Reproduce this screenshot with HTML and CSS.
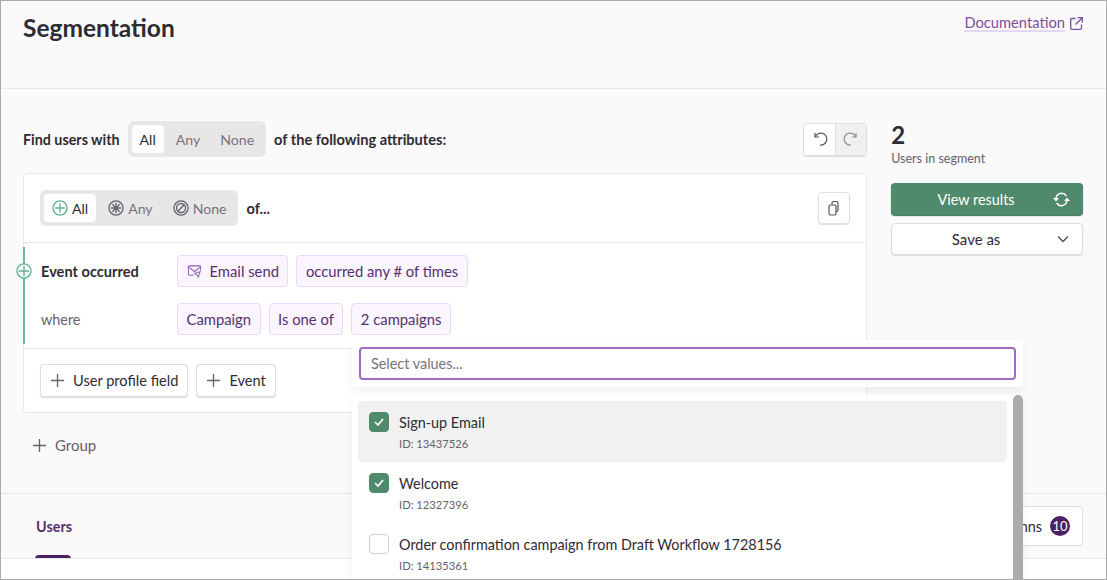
FILE: index.html
```html
<!DOCTYPE html>
<html>
<head>
  <title>Segmentation</title>
  <link rel="stylesheet" href="styles.css">
</head>
<body>
<div class="frame">
  <div class="header">
    <h1>Segmentation</h1>
    <a class="docLink"><span>Documentation</span>
      <svg width="13" height="13" viewBox="0 0 13 13" fill="none" stroke="#7d4f9e" stroke-width="1.3"><path d="M5.5 1.5H1.7a1 1 0 0 0-1 1v8.800a1 1 0 0 0 1 1h8.800a1 1 0 0 0 1-1V7.500"/><path d="M7.500 .7h4.800v4.800M12.300 .7L5.500 7.500"/></svg>
    </a>
  </div>

  <div class="builder">
    <div class="mainCol">
      <div class="findRow">
        <b class="findText">Find users with</b>
        <div class="toggle">
          <span class="opt active">All</span>
          <span class="opt">Any</span>
          <span class="opt">None</span>
        </div>
        <b>of the following attributes:</b>
        <div class="undoGroup">
          <span class="undoBtn">
            <svg width="16" height="16" viewBox="0 0 16 16" fill="none" stroke="#55505a" stroke-width="1.2"><path d="M3 2v4h4"/><path d="M3.200 6A6 6 0 1 1 8 14"/></svg>
          </span>
          <span class="undoBtn off">
            <svg width="16" height="16" viewBox="0 0 16 16" fill="none" stroke="#8c888f" stroke-width="1.2"><path d="M13 2v4H9"/><path d="M12.800 6A6 6 0 1 0 8 14"/></svg>
          </span>
        </div>
      </div>

      <div class="card">
        <div class="cardTop">
          <div class="toggle">
            <span class="opt active">
              <svg class="ico" width="16" height="16" viewBox="0 0 17 17" fill="none" stroke="#5fae8d" stroke-width="1.4"><circle cx="8.500" cy="8.500" r="7.500"/><path d="M8.500 3.500v10M3.500 8.500h10"/></svg>
              All</span>
            <span class="opt">
              <svg class="ico" width="16" height="16" viewBox="0 0 17 17" fill="none" stroke="#66616b" stroke-width="1.4"><circle cx="8.500" cy="8.500" r="7.500"/><path d="M8.500 3v11M3 8.500h11M4.600 4.600l7.800 7.800M12.400 4.600l-7.800 7.800"/></svg>
              Any</span>
            <span class="opt">
              <svg class="ico" width="16" height="16" viewBox="0 0 17 17" fill="none" stroke="#66616b" stroke-width="1.4"><circle cx="8.500" cy="8.500" r="7.500"/><circle cx="8.500" cy="8.500" r="4.800"/><path d="M5.100 11.900l6.800-6.800"/></svg>
              None</span>
          </div>
          <b>of...</b>
          <span class="copyBtn">
            <svg width="16" height="16" viewBox="0 0 16 16" fill="none" stroke="#55505a" stroke-width="1.2"><rect x="3" y="5" width="7" height="10" rx="1.5"/><path d="M6 4.500V3a1.500 1.500 0 0 1 1.500-1.500h3A1.500 1.500 0 0 1 12 3v7a1.500 1.500 0 0 1-1.500 1.500H10"/></svg>
          </span>
        </div>

        <div class="rule">
          <span class="ruleDot">
            <svg width="16" height="16" viewBox="0 0 17 17" fill="#fff" stroke="#5fae8d" stroke-width="1.4"><circle cx="8.500" cy="8.500" r="7.500"/><path d="M8.500 3v11M3 8.500h11"/></svg>
          </span>
          <div class="ruleRow">
            <b class="ruleLabel">Event occurred</b>
            <span class="tag">
              <svg class="tagIco" width="15" height="15" viewBox="0 0 16 16" fill="none" stroke="#9160b5" stroke-width="1.1"><path d="M7 12H2.500a1 1 0 0 1-1-1V3a1 1 0 0 1 1-1h11a1 1 0 0 1 1 1v4"/><path d="M1.500 3l6.500 5 6.500-5"/><path d="M8 10l6-2-2 6-1.500-2.500z"/></svg>
              Email send</span>
            <span class="tag">occurred any # of times</span>
          </div>
          <div class="ruleRow">
            <span class="ruleLabel muted">where</span>
            <span class="tag">Campaign</span>
            <span class="tag">Is one of</span>
            <span class="tag">2 campaigns</span>
          </div>
        </div>

        <div class="cardBottom">
          <span class="addBtn"><svg class="plus" width="15" height="15" viewBox="0 0 15 15" stroke="#66616b" stroke-width="1.3"><path d="M7.500 1v13M1 7.500h13"/></svg>User profile field</span>
          <span class="addBtn"><svg class="plus" width="15" height="15" viewBox="0 0 15 15" stroke="#66616b" stroke-width="1.3"><path d="M7.500 1v13M1 7.500h13"/></svg>Event</span>
        </div>
      </div>

      <div class="groupRow"><svg class="plus" width="15" height="15" viewBox="0 0 15 15" stroke="#66616b" stroke-width="1.3"><path d="M7.500 1v13M1 7.500h13"/></svg>Group</div>
    </div>

    <div class="sideCol">
      <div class="count">2</div>
      <div class="countLabel">Users in segment</div>
      <div class="viewBtn">View results
        <svg class="refresh" width="17" height="15" viewBox="0 0 17 15" fill="none" stroke="#fff" stroke-width="1.5"><path d="M3 6.500A5.600 5.600 0 0 1 13.300 4"/><path d="M14 8.500A5.600 5.600 0 0 1 3.700 11"/><path d="M0 6h6L3 9.500zM11 9h6l-3-3.500z" fill="#fff" stroke="none"/></svg>
      </div>
      <div class="saveBtn">Save as
        <svg class="chev" width="12" height="8" viewBox="0 0 12 8" fill="none" stroke="#55505a" stroke-width="1.4"><path d="M1 1.500l5 5 5-5"/></svg>
      </div>
    </div>
  </div>

  <div class="results">
    <span class="usersTab">Users</span>
    <span class="columnsBtn">Columns <em>10</em></span>
  </div>
  <div class="footerBand"></div>

  <div class="dropdown">
    <div class="searchPanel">
      <div class="searchInput">Select values...</div>
    </div>
    <div class="listPanel">
      <div class="item hover">
        <span class="check on"><svg width="12" height="10" viewBox="0 0 12 10" fill="none" stroke="#fff" stroke-width="1.7"><path d="M2 5l3 3 5-6"/></svg></span>
        <div><div class="itemName">Sign-up Email</div><div class="itemId">ID: 13437526</div></div>
      </div>
      <div class="item">
        <span class="check on"><svg width="12" height="10" viewBox="0 0 12 10" fill="none" stroke="#fff" stroke-width="1.7"><path d="M2 5l3 3 5-6"/></svg></span>
        <div><div class="itemName">Welcome</div><div class="itemId">ID: 12327396</div></div>
      </div>
      <div class="item">
        <span class="check"></span>
        <div><div class="itemName">Order confirmation campaign from Draft Workflow 1728156</div><div class="itemId">ID: 14135361</div></div>
      </div>
      <div class="scrollThumb"></div>
    </div>
  </div>
</div>
</body>
</html>
```
FILE: styles.css
```css
* {
    box-sizing: border-box;
}
html, body {
    margin: 0;
    padding: 0;
}
body {
    font-family: "Lato", "Liberation Sans", sans-serif;
    font-size: 14.4px;
    color: #2f2b33;
}
b {
    font-weight: 700;
    font-size: 14.6px;
}
.frame {
    position: relative;
    width: 1107px;
    height: 580px;
    overflow: hidden;
    background: #fafafa;
    border: 1px solid #ababab;
}

.header {
    display: flex;
    justify-content: space-between;
    height: 88px;
    padding: 0 23px 0 22px;
    border-bottom: 1px solid #e9e8e9;
}
.header h1 {
    margin: 12px 0 0 0;
    font-size: 24.5px;
    line-height: 29px;
    font-weight: 700;
}
.docLink {
    display: flex;
    align-items: center;
    gap: 5px;
    height: 20px;
    margin-top: 12px;
    font-size: 14.7px;
    color: #7d4f9e;
}
.docLink span {
    border-bottom: 2px solid #e6d6f2;
    line-height: 16px;
}

.builder {
    display: flex;
    gap: 24px;
    height: 405px;
    padding: 32px 23px 0 22px;
    border-bottom: 1px solid #e9e8e9;
}
.mainCol {
    width: 845px;
}
.sideCol {
    width: 192px;
}

.findRow {
    display: flex;
    align-items: center;
    gap: 8px;
    height: 36px;
}
.findText {
    font-size: 14.3px;
}
.toggle {
    display: flex;
    align-items: center;
    height: 36px;
    padding: 4px;
    background: #e8e7e8;
    border-radius: 6px;
    font-size: 14.1px;
}
.opt {
    display: flex;
    align-items: center;
    gap: 4px;
    height: 28px;
    padding: 0 8px;
    margin-right: 4px;
    border-radius: 4px;
    color: #77727c;
}
.opt:last-child {
    margin-right: 0;
}
.opt.active {
    background: #fff;
    color: #2f2b33;
}
.undoGroup {
    display: flex;
    margin-left: auto;
    height: 33px;
    border: 1px solid #dfdedf;
    border-radius: 4px;
    box-shadow: 0 1px 1px #ddd;
    overflow: hidden;
}
.undoBtn {
    display: flex;
    align-items: center;
    justify-content: center;
    width: 31px;
    background: #fff;
}
.undoBtn.off {
    background: #f1f0f1;
    border-left: 1px solid #dfdedf;
}

.card {
    margin-top: 16px;
    background: #fff;
    border: 1px solid #e9e8e9;
    border-radius: 4px;
}
.cardTop {
    display: flex;
    align-items: center;
    gap: 8px;
    height: 69px;
    padding: 0 16px;
    border-bottom: 1px solid #e9e8e9;
}
.copyBtn {
    display: flex;
    align-items: center;
    justify-content: center;
    width: 32px;
    height: 32px;
    margin-left: auto;
    border: 1px solid #dfdedf;
    border-radius: 4px;
    box-shadow: 0 1px 1px #ddd;
}
.rule {
    position: relative;
    height: 105px;
    padding-top: 12px;
}
.rule::before {
    content: "";
    position: absolute;
    left: -1px;
    top: 4px;
    bottom: 4px;
    width: 2px;
    background: #6fb596;
}
.ruleDot {
    position: absolute;
    left: -8px;
    top: 20px;
    width: 16px;
    height: 16px;
}
.ruleDot svg {
    display: block;
}
.ruleRow {
    display: flex;
    align-items: center;
    gap: 8px;
    height: 32px;
    margin-bottom: 16px;
    padding-left: 17px;
}
.ruleLabel {
    width: 128px;
}
.muted {
    color: #66616b;
}
.tag {
    display: flex;
    align-items: center;
    height: 32px;
    padding: 0 8.5px;
    background: #faf5fe;
    border: 1px solid #ead9f6;
    border-radius: 4px;
    font-size: 14.8px;
    color: #55306f;
}
.tagIco {
    margin-right: 8px;
}
.cardBottom {
    display: flex;
    gap: 8px;
    height: 64px;
    padding: 15px 16px 0 16px;
    border-top: 1px solid #e9e8e9;
}
.addBtn {
    display: flex;
    align-items: center;
    height: 33px;
    padding: 0 9px 0 9px;
    background: #fff;
    border: 1px solid #dfdedf;
    border-radius: 4px;
    box-shadow: 0 1px 1px #ddd;
    font-size: 14.6px;
}
.plus {
    margin-right: 8px;
}
.groupRow {
    display: flex;
    align-items: center;
    height: 32px;
    margin-top: 16px;
    padding-left: 9px;
    font-size: 15px;
    color: #66616b;
}

.count {
    font-size: 24px;
    font-weight: 700;
    line-height: 28px;
}
.countLabel {
    font-size: 12.5px;
    line-height: 16px;
    margin-top: 2px;
    color: #66616b;
}
.viewBtn, .saveBtn {
    position: relative;
    display: flex;
    align-items: center;
    justify-content: center;
    height: 32px;
    padding-right: 22px;
    border-radius: 4px;
}
.viewBtn {
    margin-top: 16px;
    background: #4f8a6c;
    color: #fff;
    box-shadow: 0 1px 1px #3d6e55;
}
.saveBtn {
    margin-top: 8px;
    background: #fff;
    border: 1px solid #dfdedf;
    box-shadow: 0 1px 1px #ddd;
    font-size: 15px;
}
.refresh, .chev {
    position: absolute;
    right: 13px;
}

.results {
    display: flex;
    justify-content: space-between;
    align-items: center;
    height: 64px;
    padding: 0 23px 0 35px;
}
.usersTab {
    color: #55306f;
    font-weight: 700;
}
.columnsBtn {
    display: flex;
    align-items: center;
    gap: 8px;
    height: 40px;
    padding: 0 12px;
    background: #fff;
    border: 1px solid #dfdedf;
    border-radius: 4px;
}
.columnsBtn em {
    display: flex;
    align-items: center;
    justify-content: center;
    width: 20px;
    height: 20px;
    border-radius: 50%;
    background: #4b2163;
    color: #fff;
    font-size: 13px;
    font-style: normal;
}
.footerBand {
    position: relative;
    height: 30px;
    background: #fff;
    border-top: 1px solid #e9e8e9;
}
.usersTab::after {
    content: "";
    position: absolute;
    left: 34px;
    top: 554px;
    width: 36px;
    height: 4px;
    border-radius: 4px 4px 0 0;
    background: #4b2163;
}

.dropdown {
    position: absolute;
    left: 351px;
    top: 339px;
    width: 671px;
}
.searchPanel {
    height: 47px;
    padding: 7px 7px 0 7px;
    background: #fff;
    border-radius: 4px;
    box-shadow: 0 4px 10px rgba(0, 0, 0, 0.06);
}
.searchInput {
    height: 33px;
    padding-left: 10px;
    line-height: 29px;
    background: #fff;
    border: 2px solid #9b6cc0;
    border-radius: 4px;
    color: #77727c;
}
.listPanel {
    position: relative;
    height: 190px;
    margin-top: 8px;
    padding: 6px 16px 0 6px;
    background: #fff;
    border-radius: 4px 4px 0 0;
    box-shadow: 0 4px 10px rgba(0, 0, 0, 0.06);
}
.item {
    display: flex;
    gap: 10px;
    height: 61px;
    padding: 12px 10px 0 11px;
    border-radius: 4px;
}
.item.hover {
    background: #f1f1f1;
}
.check {
    display: flex;
    align-items: center;
    justify-content: center;
    width: 20px;
    height: 20px;
    margin-top: -1px;
    background: #fff;
    border: 1px solid #cfcdd0;
    border-radius: 4px;
}
.check.on {
    background: #4f8a6c;
    border-color: #4f8a6c;
}
.itemName {
    line-height: 20px;
}
.itemId {
    margin-top: 3px;
    font-size: 11.2px;
    line-height: 16px;
    color: #66616b;
}
.scrollThumb {
    position: absolute;
    right: 0;
    top: 0;
    width: 10px;
    height: 200px;
    background: #ababab;
    border-radius: 5px 5px 0 0;
}
```
